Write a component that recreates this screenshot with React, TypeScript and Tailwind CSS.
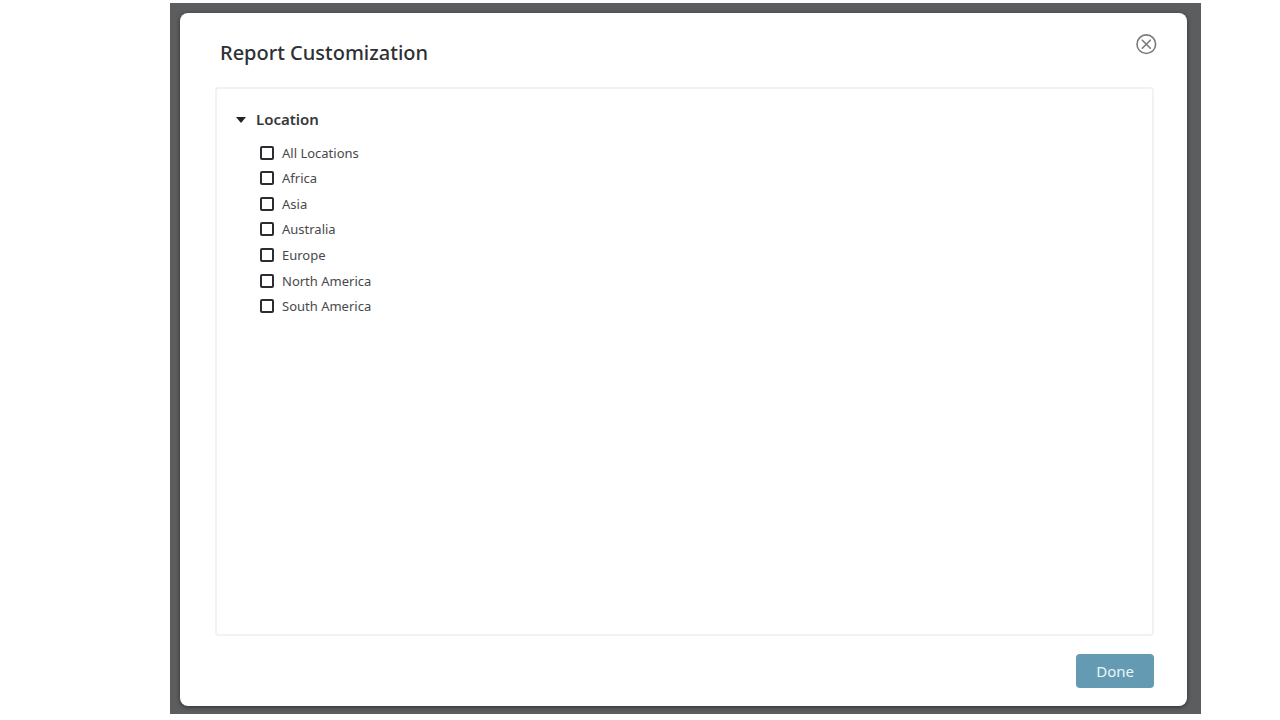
import { FC, useState } from "react";

const locations = [
  "All Locations",
  "Africa",
  "Asia",
  "Australia",
  "Europe",
  "North America",
  "South America",
];

const CloseIcon = () => (
  <svg
    width="22"
    height="22"
    viewBox="0 0 22 22"
    fill="none"
    stroke="#77797c"
    strokeWidth="1.6"
    strokeLinecap="round"
    aria-hidden="true"
  >
    <circle cx="11.3" cy="11.2" r="9.3" />
    <path d="M7.3 7.2l8 8M15.3 7.2l-8 8" />
  </svg>
);

interface LocationOptionProps {
  name: string;
  checked: boolean;
  onToggle: () => void;
}

const LocationOption: FC<LocationOptionProps> = ({
  name,
  checked,
  onToggle,
}) => (
  <li className="flex items-center">
    <label className="flex items-center gap-2 cursor-pointer">
      <input
        type="checkbox"
        checked={checked}
        onChange={onToggle}
        className="appearance-none size-3.5 rounded-xs border-2 border-[#2b2d30] bg-white checked:bg-[#649bb3]"
      />
      <span className="text-[13px] leading-5 text-[#48494b]">{name}</span>
    </label>
  </li>
);

export default function App() {
  const [open, setOpen] = useState(true);
  const [selected, setSelected] = useState<string[]>([]);

  const toggle = (name: string) => {
    setSelected((prev) =>
      prev.includes(name) ? prev.filter((n) => n !== name) : [...prev, name]
    );
  };

  return (
    <div className="flex h-screen bg-white pt-[3px] pb-[6px] pl-[170px] pr-[79px] font-['Noto_Sans','Open_Sans',sans-serif]">
      <div className="flex flex-1 bg-[#5b5d5f] pt-2.5 pb-2 pl-2.5 pr-3.5">
        <div
          role="dialog"
          aria-labelledby="dialog-title"
          className="flex flex-1 flex-col rounded-lg bg-white pt-5 pb-[18px] pl-[35px] pr-[33px] shadow-[0_1px_4px_rgba(0,0,0,0.5)]"
        >
          <header className="flex items-start justify-between pl-[5px] pb-5">
            <h1
              id="dialog-title"
              className="pt-1.5 text-xl leading-7 font-medium text-[#2e3033]"
            >
              Report Customization
            </h1>
            <button type="button" aria-label="Close" className="-mr-[3px]">
              <CloseIcon />
            </button>
          </header>

          <section className="flex-1 rounded-sm border-2 border-[#f2f2f2] px-[19px] pt-[18px]">
            <button
              type="button"
              aria-expanded={open}
              onClick={() => setOpen(!open)}
              className="flex items-center gap-2.5 text-[15px] leading-6 font-semibold text-[#36383b]"
            >
              <svg
                width="10"
                height="8"
                viewBox="0 0 10 8"
                fill="#222"
                aria-hidden="true"
              >
                <path d="M0 2h10L5 8z" />
              </svg>
              Location
            </button>
            {open && (
              <ul className="mt-[9px] ml-6 grid h-[179px] auto-rows-fr">
                {locations.map((name) => (
                  <LocationOption
                    key={name}
                    name={name}
                    checked={selected.includes(name)}
                    onToggle={() => toggle(name)}
                  />
                ))}
              </ul>
            )}
          </section>

          <footer className="flex justify-end pt-[18px]">
            <button
              type="button"
              className="rounded-sm bg-[#649bb3] px-5 py-1.5 text-[15px] leading-[22px] text-[#e9f6fb]"
            >
              Done
            </button>
          </footer>
        </div>
      </div>
    </div>
  );
}
